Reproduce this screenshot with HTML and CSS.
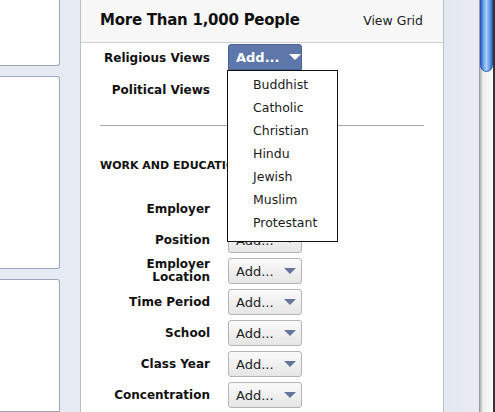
FILE: index.html
```html
<!DOCTYPE html>
<html>
<head>
<meta charset="utf-8">
<link rel="stylesheet" href="styles.css">
</head>
<body>
<div class="page">
  <aside class="left">
    <div class="lbox b1"></div>
    <div class="lbox b2"></div>
    <div class="lbox b3"></div>
  </aside>
  <main class="panel">
    <header class="phead">
      <h1 class="title">More Than 1,000 People</h1>
      <span class="viewgrid">View Grid</span>
    </header>
    <div class="grid first">
      <div class="lab">Religious Views</div>
      <div class="cell">
        <span class="btn active">Add...<i class="tri"></i></span>
        <ul class="menu">
          <li>Buddhist</li>
          <li>Catholic</li>
          <li>Christian</li>
          <li>Hindu</li>
          <li>Jewish</li>
          <li>Muslim</li>
          <li>Protestant</li>
        </ul>
      </div>
      <div class="lab">Political Views</div>
      <div class="cell"><span class="btn hidden"><i class="tri"></i></span></div>
    </div>
    <hr class="sep">
    <h2 class="section">WORK AND EDUCATION</h2>
    <div class="grid work">
      <div class="lab">Employer</div>
      <div class="cell"><span class="btn hidden"><i class="tri"></i></span></div>
      <div class="lab">Position</div>
      <div class="cell"><span class="btn">Add...<i class="tri"></i></span></div>
      <div class="lab two">Employer<br>Location</div>
      <div class="cell"><span class="btn">Add...<i class="tri"></i></span></div>
      <div class="lab">Time Period</div>
      <div class="cell"><span class="btn">Add...<i class="tri"></i></span></div>
      <div class="lab">School</div>
      <div class="cell"><span class="btn">Add...<i class="tri"></i></span></div>
      <div class="lab">Class Year</div>
      <div class="cell"><span class="btn">Add...<i class="tri"></i></span></div>
      <div class="lab">Concentration</div>
      <div class="cell"><span class="btn">Add...<i class="tri"></i></span></div>
      <div class="lab"></div>
      <div class="cell"><span class="btn"><i class="tri"></i></span></div>
    </div>
  </main>
  <div class="strip"></div>
  <div class="scrollbar"><div class="thumb"></div></div>
</div>
</body>
</html>
```

FILE: styles.css
```css
* { box-sizing: border-box; }
html, body { margin: 0; padding: 0; }
body {
  width: 495px;
  height: 412px;
  overflow: hidden;
  background: #e6eaf2;
  font-family: "DejaVu Sans", "Liberation Sans", sans-serif;
  color: #1a1a1a;
}
.page {
  display: flex;
  height: 412px;
  overflow: hidden;
}
.left {
  width: 60px;
  flex: none;
  display: flex;
  flex-direction: column;
  gap: 10px;
}
.lbox {
  background: #fff;
  border: 1px solid #9ea7ba;
  border-left: none;
  border-radius: 0 0 3px 0;
}
.b1 { height: 69px; border-top: none; }
.b2 { height: 203px; border-radius: 0 3px 3px 0; }
.b3 { height: 140px; border-radius: 0 3px 0 0; }

.panel {
  margin-left: 20px;
  width: 364px;
  flex: none;
  background: #fff;
  border-left: 1px solid #b9c0cd;
  border-right: 1px solid #b9c0cd;
  position: relative;
}
.phead {
  height: 43px;
  background: #f7f7f7;
  border-bottom: 1px solid #cfcfcf;
  display: flex;
  align-items: center;
  justify-content: space-between;
  padding: 0 20px 2px 19px;
}
.title {
  margin: 0;
  font-size: 15px;
  font-weight: bold;
  letter-spacing: -0.25px;
  color: #111;
}
.viewgrid {
  font-size: 12.5px;
  color: #222;
}
.grid {
  display: grid;
  grid-template-columns: 129px 1fr;
  column-gap: 18px;
  align-items: center;
}
.first { margin-top: 1px; row-gap: 6px; }
.work { row-gap: 5px; }
.lab {
  text-align: right;
  font-size: 12px;
  font-weight: bold;
  color: #111;
  line-height: 14px;
  padding-top: 2px;
}
.work .lab { padding-top: 0; }
.lab.two { line-height: 13px; padding-top: 0; }
.cell { position: relative; height: 26px; }
.btn {
  display: inline-flex;
  align-items: center;
  width: 74px;
  height: 26px;
  padding: 0 0 0 7px;
  border: 1px solid #b4b4b4;
  border-radius: 3px;
  background: linear-gradient(#fafafa, #e6e6e6);
  font-size: 13px;
  color: #222;
}
.btn.hidden { visibility: hidden; }
.tri {
  margin-left: 10px;
  width: 0;
  height: 0;
  border-left: 6px solid transparent;
  border-right: 6px solid transparent;
  border-top: 6px solid #66759c;
}
.btn.active {
  background: #5e77aa;
  border-color: #4a6194;
  border-bottom-left-radius: 0;
  border-bottom-right-radius: 0;
  color: #fff;
  font-weight: bold;
}
.btn.active .tri { border-top-color: #fff; margin-left: 9px; }
.menu {
  position: absolute;
  left: -1px;
  top: 26px;
  z-index: 5;
  width: 111px;
  margin: 0;
  padding: 2px 0 7px 25px;
  list-style: none;
  background: #fff;
  border: 1px solid #111;
  font-size: 12.5px;
  color: #1a1a1a;
}
.menu li { height: 23px; line-height: 23px; }
.sep {
  margin: 23px 19px 0 19px;
  border: none;
  border-top: 1px solid #aaa;
  height: 0;
}
.section {
  margin: 32px 0 22px 19px;
  font-size: 11px;
  font-weight: bold;
  line-height: 16px;
  color: #111;
  white-space: nowrap;
}
.strip {
  width: 35px;
  flex: none;
  background: linear-gradient(90deg, #e4e8f0, #e8ebf2);
}
.scrollbar {
  width: 16px;
  flex: none;
  background: linear-gradient(90deg, #8e8e8e 0, #c8c8c8 2px, #efefef 4px, #fafafa 100%);
  border-right: 2px solid #333;
  position: relative;
}
.thumb {
  margin: -8px 0 0 1px;
  width: 13px;
  height: 80px;
  border-radius: 7px;
  border: 1px solid #2a5ab8;
  background: linear-gradient(90deg, #2f64c8 0, #7fb3f2 30%, #a8d0fa 50%, #6aa0e8 75%, #3569c6 100%);
}
```
